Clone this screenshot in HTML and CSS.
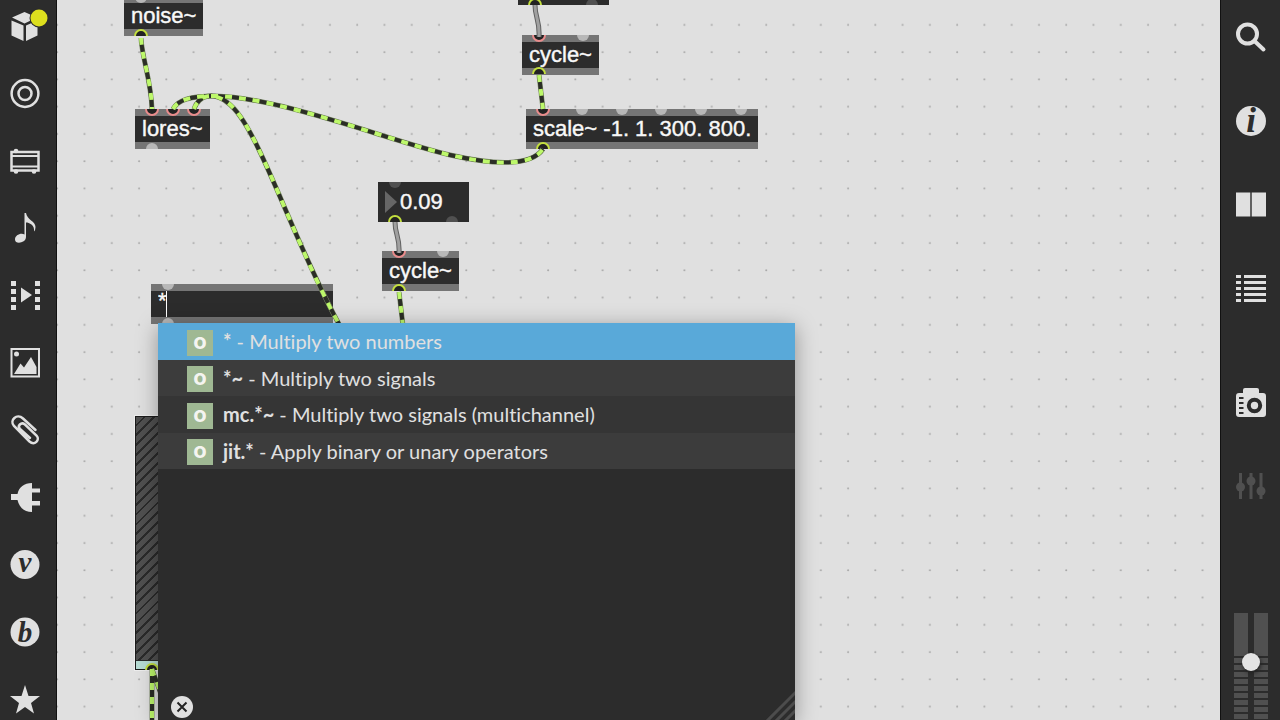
FILE: index.html
```html
<!DOCTYPE html>
<html lang="en">
<head>
<meta charset="utf-8">
<title>Patcher</title>
<link rel="stylesheet" href="styles.css">
</head>
<body>
<nav class="rail rail-left" aria-label="Browser">
  <button class="tool" aria-label="Packages"><svg viewBox="0 0 30 30"><path d="M2 6.500 14.500 1 27 6.500 14.500 12.500Z M1.500 9.500 13.500 14.500V30L1.500 24.500Z M27.500 9.500 16 14.500V30L27.500 24.500Z"/><circle cx="29" cy="7" r="9.500" class="ink"/><circle cx="29" cy="7" r="8.500" class="notice"/></svg></button>
  <button class="tool" aria-label="Objects"><svg viewBox="0 0 30 30"><g class="line"><circle cx="15" cy="15.500" r="13.400"/><circle cx="15" cy="15.500" r="6.500"/></g></svg></button>
  <button class="tool" aria-label="Devices"><svg viewBox="0 0 30 30"><path class="line" d="M1.500 6H28.500V24.500H1.500Z"/><path class="line thin" d="M2 10H28M2 20.500H28"/><circle cx="6" cy="5" r="2.300"/><circle cx="6" cy="25.500" r="2.300"/><circle cx="24" cy="25.500" r="2.300"/></svg></button>
  <button class="tool" aria-label="Audio"><svg viewBox="0 0 30 30"><path d="M14.500 0H16C17 7 25.500 8 25.500 14Q25.500 17 24 18.500C25 12 19 9.500 16 9.500V24C16 30 5 32 5 26.500C5 22 11 19.500 14.500 21.500Z"/></svg></button>
  <button class="tool" aria-label="Video"><svg viewBox="0 0 30 30"><path d="M11 7.500 22 15 11 22.500Z"/><path class="film" d="M3.500 1V30M27.500 1V30"/></svg></button>
  <button class="tool" aria-label="Images"><svg viewBox="0 0 30 30"><path class="line thin" d="M1.500 2H29V29.500H1.500Z"/><circle cx="6.500" cy="7" r="2.500"/><path d="M4 27 10.500 16.500 14 20.500 21 10 26.500 20V27Z"/></svg></button>
  <button class="tool" aria-label="Attachments"><svg viewBox="0 0 30 30"><path class="line clip" d="M25.500 15 13 3.500C7-2-1 5 4 11L19.500 26.500C24.500 31 30.500 25 26.500 20.500L15 9.500C11 6.500 7 11 10 14L20 23"/></svg></button>
  <button class="tool" aria-label="Plug-ins"><svg viewBox="0 0 30 30"><path d="M1 12H7.500C9 5 14 1 22 1V6.500H30V10.500H22V19H30V23.500H22V30C14 30 9 25 7.500 18H1Z"/></svg></button>
  <button class="tool" aria-label="Vizzie"><svg viewBox="0 0 30 30"><circle cx="15" cy="15.500" r="14.500"/><text class="letter" x="15" y="23">v</text></svg></button>
  <button class="tool" aria-label="BEAP"><svg viewBox="0 0 30 30"><circle cx="15" cy="15" r="14.500"/><text class="letter" x="15" y="25">b</text></svg></button>
  <button class="tool" aria-label="Favourites"><svg viewBox="0 0 30 30"><path d="M15 1 18.500 12H30L21 19 24 29.500 15 23 6 29.500 9 19 0 12H11.500Z"/></svg></button>
</nav>

<main class="patcher">
  <svg class="grid" aria-hidden="true">
    <defs><pattern id="dots" x="41" y="11" width="27.270" height="27.270" patternUnits="userSpaceOnUse"><circle cx="13.800" cy="13.800" r="1"/></pattern></defs>
    <rect width="100%" height="100%" fill="url(#dots)"/>
  </svg>

  <div class="node noise">noise~</div>
  <div class="node lores">lores~</div>
  <div class="number rate-a"></div>
  <div class="node cycle-a">cycle~</div>
  <div class="node scale">scale~ -1. 1. 300. 800.</div>
  <div class="number rate-b"><span class="arrow"></span><input aria-label="Frequency" value="0.09"></div>
  <div class="node cycle-b">cycle~</div>
  <div class="node editor"><input aria-label="Object name" value="*"></div>
  <div class="gain"></div>

  <svg class="cables" aria-hidden="true">
    <defs>
      <path id="c1" d="M84 38C85 58 94 80 95 109"/>
      <path id="c2" d="M116 109C121 100 133 96 158 96C223 97 333 141 393 155C433 164 473 168 486 149"/>
      <path id="c3" d="M137 109C142 95 156 91 171 103C201 125 233 235 283 326"/>
      <path id="c4" d="M482 75 486 109"/>
      <path id="c5" d="M342 292 346 326"/>
      <path id="c6" d="M95 669V730"/>
      <path id="c7" d="M95 669 106 700"/>
      <path id="out" d="M-6 0A6 6 0 0 1 6 0"/>
      <path id="in" d="M-6 0A6 6 0 0 0 6 0"/>
    </defs>
    <g class="port">
      <use href="#in" x="84" y="-3"/><use href="#out" x="95" y="149"/>
      <use href="#in" x="526" y="35"/>
      <use href="#in" x="525" y="109"/><use href="#in" x="565" y="109"/><use href="#in" x="604" y="109"/><use href="#in" x="644" y="109"/><use href="#in" x="684" y="109"/>
      <use href="#in" x="386" y="251"/><use href="#in" x="111" y="284"/><use href="#out" x="111" y="324"/>
    </g>
    <g class="port dim"><use href="#out" x="535" y="5"/><use href="#in" x="338" y="182"/><use href="#out" x="395" y="222"/></g>
    <g class="port sink"><use href="#in" x="95" y="109"/><use href="#in" x="116" y="109"/><use href="#in" x="137" y="109"/><use href="#in" x="482" y="35"/><use href="#in" x="486" y="109"/><use href="#in" x="342" y="251"/></g>
    <g class="port source"><use href="#out" x="84" y="36"/><use href="#out" x="478" y="5"/><use href="#out" x="482" y="74"/><use href="#out" x="486" y="149"/><use href="#out" x="338" y="222"/><use href="#out" x="342" y="291"/><use href="#out" x="95" y="670"/></g>
    <g class="wire-edge"><path d="M478 5C478 18 483 20 482 37M338 222C338 235 343 237 342 253"/></g>
    <g class="wire"><path d="M478 5C478 18 483 20 482 37M338 222C338 235 343 237 342 253"/></g>
    <g class="signal-edge"><use href="#c1"/><use href="#c2"/><use href="#c3"/><use href="#c4"/><use href="#c5"/><use href="#c7"/><use href="#c6"/></g>
    <g class="signal-core"><use href="#c1"/><use href="#c2"/><use href="#c3"/><use href="#c4"/><use href="#c5"/><use href="#c7"/><use href="#c6"/></g>
    <g class="signal"><use href="#c1"/><use href="#c2"/><use href="#c3"/><use href="#c4"/><use href="#c5"/><use href="#c7"/><use href="#c6"/></g>
  </svg>
  <span class="caret"></span>

  <section class="completion" aria-label="Completions">
    <ul class="options">
      <li><button class="option selected"><span class="badge">o</span><span><b>*</b> - Multiply two numbers</span></button></li>
      <li><button class="option"><span class="badge">o</span><span><b>*~</b> - Multiply two signals</span></button></li>
      <li><button class="option"><span class="badge">o</span><span><b>mc.*~</b> - Multiply two signals (multichannel)</span></button></li>
      <li><button class="option"><span class="badge">o</span><span><b>jit.*</b> - Apply binary or unary operators</span></button></li>
    </ul>
    <footer class="completion-foot">
      <button class="close" aria-label="Close"><svg viewBox="0 0 22 22"><circle cx="11" cy="11" r="11"/><path d="M6.500 6.500 15.500 15.500M15.500 6.500 6.500 15.500"/></svg></button>
      <svg class="resize" viewBox="0 0 30 30" aria-hidden="true"><path d="M0 33 33 0M9 33 33 9M18 33 33 18"/></svg>
    </footer>
  </section>
</main>

<aside class="rail rail-right" aria-label="Inspector">
  <div class="tools">
    <button class="tool" aria-label="Search"><svg viewBox="0 0 30 30"><circle class="lens" cx="11.500" cy="12" r="9.500"/><path class="handle" d="M19 19.500 27.500 27.500"/></svg></button>
    <button class="tool" aria-label="Information"><svg viewBox="0 0 30 30"><circle cx="15" cy="15" r="15"/><text class="letter info" x="15" y="26">i</text></svg></button>
    <button class="tool" aria-label="Reference"><svg viewBox="0 0 30 30"><path d="M0 2.500H14.300V26.500H0ZM15.700 2.500H30V26.500H15.700Z"/></svg></button>
    <button class="tool" aria-label="Console"><svg viewBox="0 0 30 30"><path d="M0 1H5V4H0ZM8 1H30V4H8ZM0 7H5V10H0ZM8 7H30V10H8ZM0 13H5V16H0ZM8 13H30V16H8ZM0 19H5V22H0ZM8 19H30V22H8ZM0 25H5V28H0ZM8 25H30V28H8Z"/></svg></button>
  </div>
  <div class="tools">
    <button class="tool" aria-label="Snapshots"><svg viewBox="0 0 30 30"><path d="M7 5V2Q7 0 9 0H21Q23 0 23 2V5H27Q30 5 30 8V26Q30 29 27 29H3Q0 29 0 26V8Q0 5 3 5Z"/><circle class="iris" cx="18.500" cy="17.500" r="5.700"/><path class="vents" d="M3 10H7.500M3 15H7.500M3 20H7.500M3 25H7.500"/></svg></button>
    <button class="tool muted" aria-label="Mixer"><svg viewBox="0 0 30 30"><path d="M3 1H6V27H3ZM13.500 1H16.500V27H13.500ZM23.500 1H26.500V27H23.500Z"/><circle cx="4.500" cy="15" r="4.500"/><circle cx="15" cy="9" r="4.500"/><circle cx="25" cy="19" r="4.500"/></svg></button>
  </div>
  <div class="volume">
    <span class="meter left"></span><span class="meter right"></span>
    <input type="range" aria-label="Volume" min="0" max="100" value="55">
  </div>
</aside>
</body>
</html>
```
FILE: styles.css
```css
* { box-sizing: border-box; }

body {
  margin: 0;
  height: 100vh;
  display: flex;
  overflow: hidden;
  background: #e0e0e0;
  font-family: Lato, sans-serif;
}

button, input { font: inherit; color: inherit; border: 0; padding: 0; background: none; outline: 0; }
svg { display: block; overflow: visible; }

/* Side rails */
.rail { flex: none; display: flex; flex-direction: column; align-items: center; background: #2c2c2c; }
.rail-left { width: 57px; padding: 11px 6px 6px 0; border-right: 1px solid #111; justify-content: space-between; }
.rail-right { width: 60px; padding-top: 22px; border-left: 1px solid #111; gap: 84px; }
.tools { display: grid; gap: 54px; padding-left: 1px; }
.tool { width: 30px; height: 30px; }
.tool svg { width: 30px; height: 30px; fill: #e0e0e0; }
.tool.muted svg { fill: #505050; }
.tool .ink { fill: #2c2c2c; }
.tool .notice { fill: #dddf1e; }
.tool .line { fill: none; stroke: #e0e0e0; stroke-width: 2.500; }
.tool .thin { stroke-width: 2; }
.tool .clip { stroke-linecap: round; }
.tool .film { stroke: #e0e0e0; stroke-width: 5; stroke-dasharray: 5 3; }
.tool .lens { fill: none; stroke: #e0e0e0; stroke-width: 4; }
.tool .handle { stroke: #e0e0e0; stroke-width: 4; stroke-linecap: round; }
.tool .iris { fill: none; stroke: #2c2c2c; stroke-width: 4; }
.tool .vents { stroke: #2c2c2c; stroke-width: 2; }
.letter { font: italic bold 29px "Liberation Serif", serif; fill: #2c2c2c; text-anchor: middle; }
.letter.info { font-size: 35px; }

.volume {
  flex: 1;
  margin-top: 27px;
  display: grid;
  grid-template-columns: 14px 14px;
  grid-template-rows: 100%;
  column-gap: 6px;
  min-height: 0;
}
.meter {
  grid-row: 1;
  background: linear-gradient(#505050, #505050) 0 0 / 100% 43px no-repeat,
    repeating-linear-gradient(#2c2c2c 0 2px, #505050 2px 7px) 0 43px no-repeat;
}
.meter.left { grid-column: 1; }
.meter.right { grid-column: 2; }
.volume input {
  grid-row: 1;
  grid-column: 1 / 3;
  justify-self: center;
  width: 18px;
  height: 100%;
  margin: 0;
  appearance: none;
  writing-mode: vertical-lr;
  direction: rtl;
}
.volume input::-webkit-slider-thumb {
  appearance: none;
  width: 18px;
  height: 18px;
  border-radius: 50%;
  background: #e4e4e4;
  box-shadow: 1px 2px 4px #222;
}

/* Patcher canvas */
.patcher { flex: 1; position: relative; overflow: hidden; min-width: 0; }
.grid, .cables { position: absolute; inset: 0; width: 100%; height: 100%; }
.grid circle { fill: #a8a8a8; }
.cables { pointer-events: none; }

.node, .number {
  position: absolute;
  height: 40px;
  background: #2c2c2c;
  color: #f8f8f8;
  font: 22px/26px "Liberation Sans", sans-serif;
  -webkit-text-stroke: 0.400px #f8f8f8;
  white-space: nowrap;
}
.node { padding: 0 7px; border: solid #757575; border-width: 7px 0; }
.number { width: 91px; display: flex; align-items: center; gap: 3px; padding-left: 7px; }
.number input { width: 60px; }
.arrow { border: solid transparent; border-width: 11px 0 11px 12px; border-left-color: #666; }

.noise { left: 67px; top: -4px; }
.lores { left: 78px; top: 109px; }
.rate-a { left: 461px; top: -35px; }
.cycle-a { left: 465px; top: 35px; }
.scale { left: 469px; top: 109px; }
.rate-b { left: 321px; top: 182px; }
.cycle-b { left: 325px; top: 251px; }
.editor { left: 94px; top: 284px; width: 182px; }
.editor input { display: block; width: 100%; height: 26px; padding-bottom: 6px; line-height: 20px; }
.caret { position: absolute; left: 109px; top: 291px; width: 1px; height: 26px; background: #fff; }

.gain {
  position: absolute;
  left: 78px;
  top: 416px;
  width: 60px;
  height: 254px;
  border: 1px solid #1c1c1c;
  outline: 1px solid #eee;
  background: linear-gradient(#2c2c2c, #2c2c2c) 0 243px / 100% 1px no-repeat,
    linear-gradient(#b7dcd4, #b7dcd4) 0 244px / 100% 8px no-repeat,
    repeating-linear-gradient(135deg, #505050 0 5px, #2a2a2a 5px 7px);
}

.port { fill: #b8b8b8; }
.port.dim { fill: #505050; }
.port.sink { fill: #222; stroke: #e98c8c; stroke-width: 2; }
.port.source { fill: #222; stroke: #c3df3e; stroke-width: 2; }
.wire-edge, .wire, .signal-edge, .signal-core, .signal { fill: none; }
.wire-edge { stroke: #606060; stroke-width: 5; }
.wire { stroke: #a0a0a0; stroke-width: 3; }
.signal-edge { stroke: #7c8a68; stroke-width: 5; }
.signal-core { stroke: #2b2e26; stroke-width: 4; }
.signal { stroke: #bdf86b; stroke-width: 4; stroke-dasharray: 7; }

/* Completion popup */
.completion {
  position: absolute;
  left: 101px;
  top: 323px;
  bottom: 0;
  width: 637px;
  display: flex;
  flex-direction: column;
  justify-content: space-between;
  background: #2c2c2c;
  box-shadow: 0 4px 20px rgba(0, 0, 0, .35);
}
.options { list-style: none; margin: 0; padding: 0; height: 146px; display: grid; grid-auto-rows: 1fr; }
.option {
  width: 100%;
  height: 100%;
  display: flex;
  align-items: center;
  gap: 10px;
  padding: 0 29px;
  background: #3c3c3c;
  color: #e0e0e0;
  font-size: 20px;
  font-variant-ligatures: none;
  line-height: 24px;
  text-align: left;
}
li:nth-child(3) .option { background: #353535; }
.option.selected { background: #59a9d9; }
.badge {
  width: 26px;
  height: 26px;
  margin-top: 3px;
  background: #9fb893;
  color: #f4f4f0;
  font: bold 22px/22px Inter, sans-serif;
  text-align: center;
}
.completion-foot { display: flex; justify-content: space-between; align-items: flex-start; padding-left: 13px; height: 30px; }
.close { width: 22px; height: 22px; margin-top: 6px; }
.close svg { width: 22px; fill: #e0e0e0; stroke-width: 2; }
.close path { stroke: #222; }
.resize { width: 30px; height: 30px; fill: none; stroke: #4c4c4c; stroke-width: 3; overflow: hidden; }
```
